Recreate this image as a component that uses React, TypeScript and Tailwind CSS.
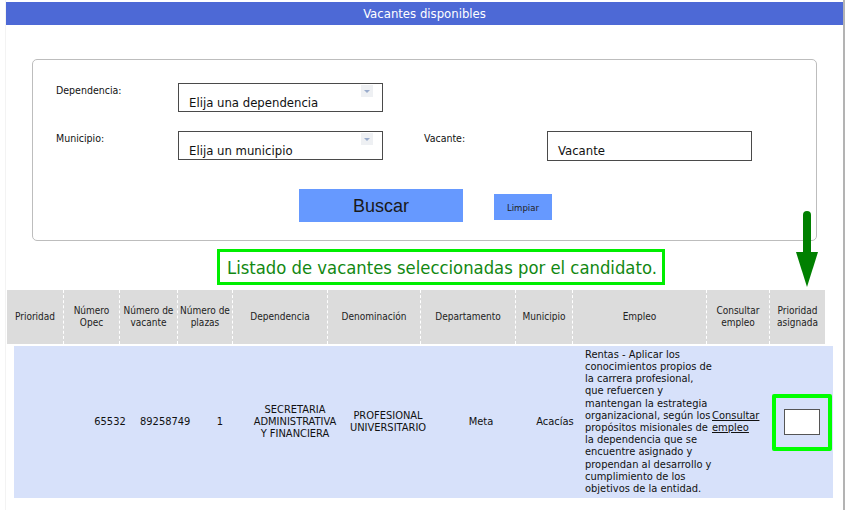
import React from "react";

const tah = { fontFamily: '"DejaVu Sans Condensed", "DejaVu Sans", sans-serif' };

const headers: { label: React.ReactNode; w: string }[] = [
  { label: "Prioridad", w: "w-[56px]" },
  { label: <>Número<br />Opec</>, w: "w-[56px]" },
  { label: <>Número de<br />vacante</>, w: "w-[58px]" },
  { label: <>Número de<br />plazas</>, w: "w-[55px]" },
  { label: "Dependencia", w: "w-[95px]" },
  { label: "Denominación", w: "w-[93px]" },
  { label: "Departamento", w: "w-[95px]" },
  { label: "Municipio", w: "w-[57px]" },
  { label: "Empleo", w: "w-[134px]" },
  { label: <>Consultar<br />empleo</>, w: "w-[63px]" },
  { label: <>Prioridad<br />asignada</>, w: "w-[56px]" },
];

const empleo = [
  "Rentas - Aplicar los",
  "conocimientos propios de",
  "la carrera profesional,",
  "que refuercen y",
  "mantengan la estrategia",
  "organizacional, según los",
  "propósitos misionales de",
  "la dependencia que se",
  "encuentre asignado y",
  "propendan al desarrollo y",
  "cumplimiento de los",
  "objetivos de la entidad.",
];

function SelectBox({ text }: { text: string }) {
  return (
    <div className="relative w-[205px] h-[29px] border border-[#4a4a4a] bg-white">
      <span className="absolute left-[10px] top-[11px] text-[13px] leading-[16px] text-[#111]" style={tah}>
        {text}
      </span>
      <div className="absolute right-[9px] top-[1px] w-[12px] h-[12px] bg-[#eef0f3] flex items-center justify-center">
        <div className="w-0 h-0 border-l-[3px] border-r-[3px] border-t-[3px] border-l-transparent border-r-transparent border-t-[#9aaccc]" />
      </div>
    </div>
  );
}

export default function App() {
  return (
    <div className="relative w-[845px] h-[510px] bg-white overflow-hidden flex" style={tah}>
      <div className="w-[6px] h-full border-r border-[#f3f3f3]" />
      <div className="w-[837px] flex flex-col">
        <div className="mt-[2px] h-[23px] bg-[#4d69d6] flex items-center justify-center text-white text-[13px]">
          Vacantes disponibles
        </div>

        {/* Form box */}
        <div className="mt-[34px] ml-[26px] w-[785px] h-[182px] border border-[#bdbdbd] rounded-[5px] flex flex-col">
          <div className="mt-[23px] flex items-start">
            <div className="w-[145px] pl-[23px] text-[10.5px] text-[#111]">Dependencia:</div>
            <SelectBox text="Elija una dependencia" />
          </div>
          <div className="mt-[19px] flex items-start">
            <div className="w-[145px] pl-[23px] text-[10.5px] text-[#111]">Municipio:</div>
            <SelectBox text="Elija un municipio" />
            <div className="ml-[41px] w-[123px] text-[10.5px] text-[#111]">Vacante:</div>
            <div className="relative w-[205px] h-[30px] border border-[#4a4a4a] bg-white">
              <span className="absolute left-[10px] top-[11px] text-[13px] leading-[16px] text-[#111]">Vacante</span>
            </div>
          </div>
          <div className="mt-[28px] flex items-start">
            <div
              className="ml-[266px] w-[164px] h-[33px] bg-[#6699ff] flex items-center justify-center text-[18px] text-[#1a1a1a] pt-[1px]"
              style={{ fontFamily: '"Liberation Sans", Arial, sans-serif' }}
            >
              Buscar
            </div>
            <div className="ml-[31px] mt-[5px] w-[58px] h-[26px] bg-[#6699ff] flex items-center justify-center text-[9.5px] text-[#222] pt-[2px]">
              Limpiar
            </div>
          </div>
        </div>

        {/* Green title */}
        <div className="mt-[8px] ml-[211px] w-[448px] h-[36px] border-[3px] border-[#00ee00] flex items-center pl-[7px] text-[18.3px] text-[#128812] pt-[1px]">
          Listado de vacantes seleccionadas por el candidato.
        </div>

        {/* Table header */}
        <div className="mt-[5px] ml-[1px] h-[54px] flex bg-[#dcdcdc] w-[818px]">
          {headers.map((h, i) => (
            <div
              key={i}
              className={`${h.w} h-full flex items-center justify-center text-center text-[10px] leading-[12px] text-[#222] ${i > 0 ? "border-l border-dashed border-white" : ""}`}
            >
              <div>{h.label}</div>
            </div>
          ))}
        </div>

        {/* Body row */}
        <div className="mt-[2px] ml-[8px] w-[819px] h-[152px] bg-[#d7e1fa] flex items-center text-[11px] leading-[12.2px] text-[#111]">
          <div className="w-[66px]" />
          <div className="w-[60px] text-center">65532</div>
          <div className="w-[50px] text-center">89258749</div>
          <div className="w-[60px] text-center">1</div>
          <div className="w-[90px] text-center">
            SECRETARIA<br />ADMINISTRATIVA<br />Y FINANCIERA
          </div>
          <div className="w-[96px] text-center">
            PROFESIONAL<br />UNIVERSITARIO
          </div>
          <div className="w-[90px] text-center">Meta</div>
          <div className="w-[58px] text-center">Acacías</div>
          <div className="w-[126px] pl-[1px] whitespace-nowrap">
            {empleo.map((l, i) => (
              <div key={i}>{l}</div>
            ))}
          </div>
          <div className="w-[60px] pl-[2px]">
            <span className="underline">Consultar</span>
            <br />
            <span className="underline">empleo</span>
          </div>
          <div className="w-[63px] flex justify-start pl-[2px]">
            <div className="w-[60px] h-[57px] border-[4px] border-[#00ff00] rounded-[2px] flex items-center justify-center">
              <div className="w-[36px] h-[26px] border border-[#555] bg-white" />
            </div>
          </div>
        </div>
      </div>
      <div className="w-[2px] h-full bg-[#b3b3b3]" />

      {/* Arrow annotation */}
      <svg className="absolute left-[794px] top-[210px]" width="26" height="80" viewBox="0 0 26 80">
        <line x1="13" y1="5" x2="13" y2="48" stroke="#008000" strokeWidth="8" strokeLinecap="round" />
        <polygon points="2,42 24,42 13,77" fill="#008000" />
      </svg>
    </div>
  );
}
